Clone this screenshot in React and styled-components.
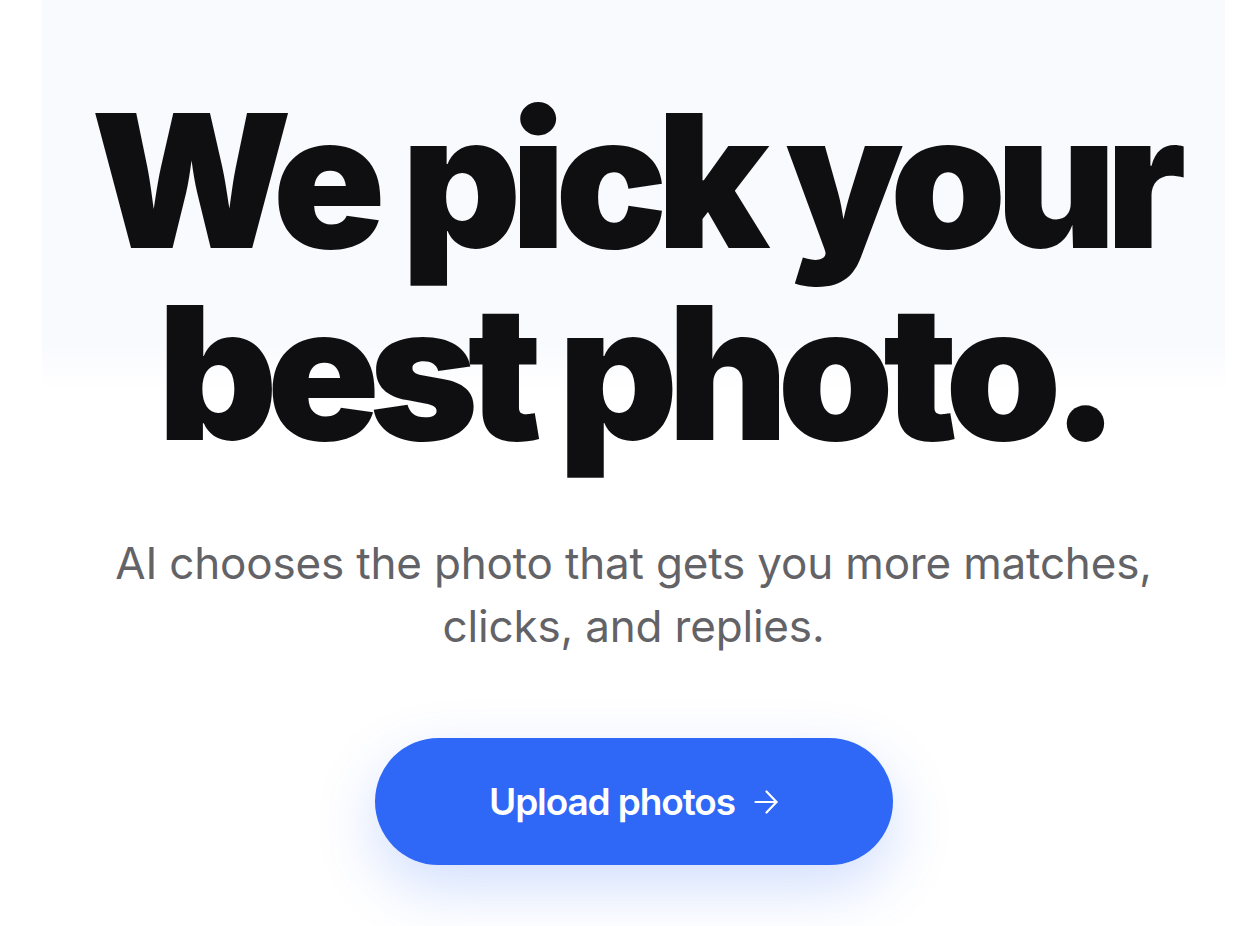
import React from 'react';
import styled, { createGlobalStyle } from 'styled-components';

const GlobalStyle = createGlobalStyle`
  html, body {
    margin: 0;
    padding: 0;
    background: #ffffff;
  }
  body {
    font-family: Inter, "Noto Sans", sans-serif;
    -webkit-font-smoothing: antialiased;
  }
`;

const Page = styled.main`
  box-sizing: border-box;
  width: 100%;
  min-height: 926px;
  padding: 0 21px 0 42px;
  background-image: linear-gradient(
    to bottom,
    #f9fafe 0%,
    #f9fafe 88%,
    rgba(249, 250, 254, 0) 100%
  );
  background-repeat: no-repeat;
  background-size: calc(100% - 63px) 392px;
  background-position: 42px 0;
  display: flex;
  flex-direction: column;
  align-items: center;
`;

const Headline = styled.h1`
  margin: 0;
  padding-top: 85px;
  font-family: Inter, sans-serif;
  font-weight: 900;
  font-size: 186px;
  line-height: 192px;
  letter-spacing: -0.057em;
  color: #0f0f12;
  text-align: center;
`;

const Subtitle = styled.p`
  margin: 63px 0 0;
  max-width: 1060px;
  font-family: Inter, sans-serif;
  font-weight: 400;
  font-size: 44px;
  line-height: 63px;
  letter-spacing: -0.004em;
  color: #636367;
  text-align: center;
`;

const CTA = styled.button`
  margin-top: 80px;
  width: 518px;
  height: 127px;
  border: none;
  border-radius: 64px;
  background: #2f67f6;
  color: #ffffff;
  font-family: Inter, sans-serif;
  font-weight: 600;
  font-size: 37px;
  letter-spacing: -0.03em;
  display: flex;
  align-items: center;
  justify-content: center;
  gap: 19px;
  cursor: pointer;
  box-shadow: 0 22px 60px rgba(47, 103, 246, 0.22);
`;

const Arrow = () => (
  <svg width="24" height="24" viewBox="0 0 24 24" fill="none" stroke="currentColor"
    strokeWidth="2.2" strokeLinecap="round" strokeLinejoin="round">
    <path d="M1.5 12h21" />
    <path d="M12.5 1.5 22.5 12 12.5 22.5" />
  </svg>
);

export default function App() {
  return (
    <>
      <GlobalStyle />
      <Page>
        <Headline>
          We pick your
          <br />
          best photo.
        </Headline>
        <Subtitle>
          AI chooses the photo that gets you more matches, clicks, and replies.
        </Subtitle>
        <CTA>
          Upload photos
          <Arrow />
        </CTA>
      </Page>
    </>
  );
}
